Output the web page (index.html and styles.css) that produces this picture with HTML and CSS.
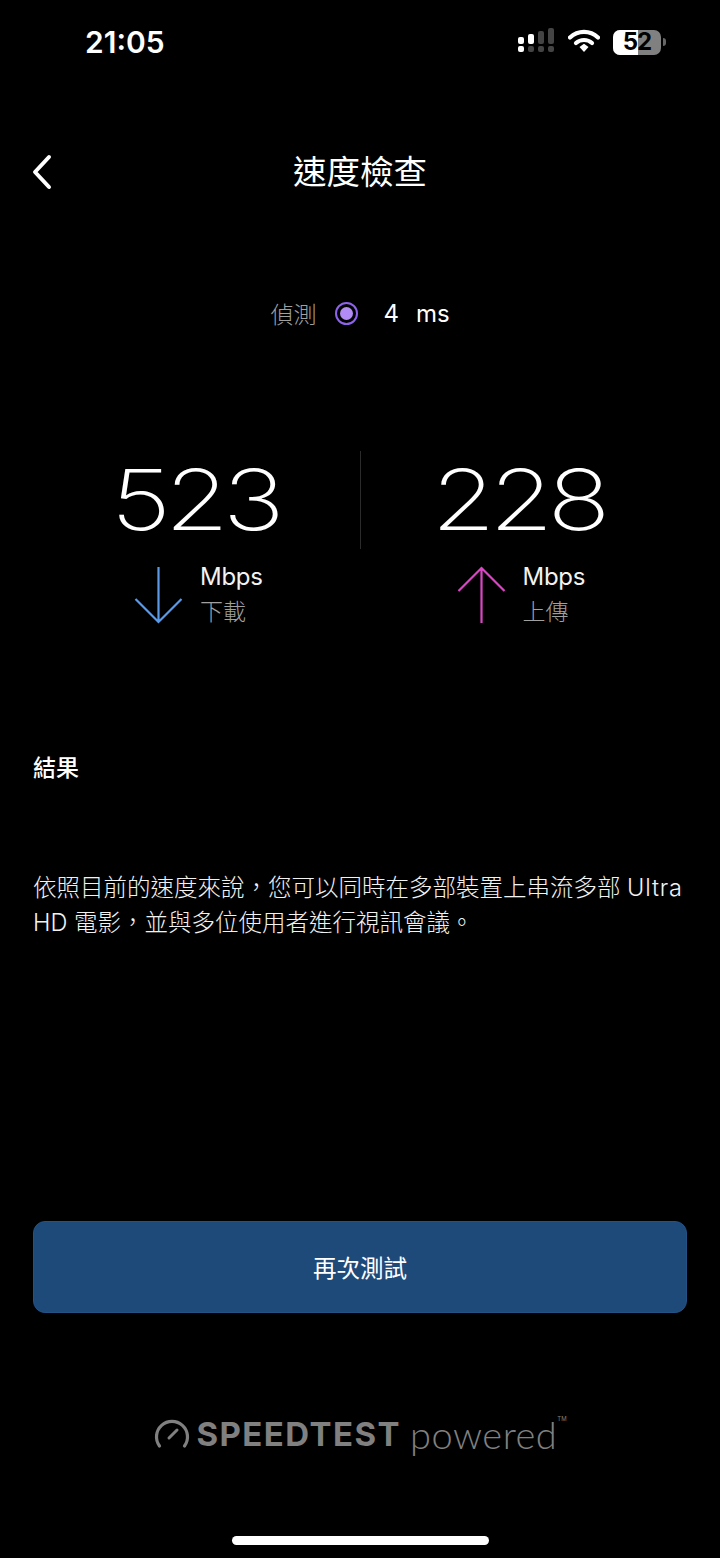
FILE: index.html
```html
<!DOCTYPE html>
<html lang="zh-Hant">
<head>
<meta charset="utf-8">
<title>速度檢查</title>
<link rel="stylesheet" href="styles.css">
</head>
<body>
<div class="page">
  <header class="status">
    <span class="clock">21:05</span>
    <div class="status-icons">
      <svg class="cell" width="38" height="26" viewBox="0 0 38 26">
        <g fill="#fff">
          <rect x="0" y="9" width="6" height="7" rx="2"/>
          <rect x="0" y="18" width="6" height="6" rx="2"/>
          <rect x="10" y="6" width="6" height="10" rx="2"/>
        </g>
        <g fill="#444">
          <rect x="10" y="18" width="6" height="6" rx="2"/>
          <rect x="20" y="3" width="6" height="13" rx="2"/>
          <rect x="20" y="18" width="6" height="6" rx="2"/>
          <rect x="30" y="0" width="6" height="16" rx="2"/>
          <rect x="30" y="18" width="6" height="6" rx="2"/>
        </g>
      </svg>
      <svg class="wifi" width="32" height="24" viewBox="0 0 32 24">
        <path d="M2 8.5C10 1 22 1 30 8.500" fill="none" stroke="#fff" stroke-width="4.200" stroke-linecap="round"/>
        <path d="M8 14C12.500 10 19.500 10 24 14" fill="none" stroke="#fff" stroke-width="4.200" stroke-linecap="round"/>
        <path d="M11.500 18L16 14.800L20.500 18L16 23Z" fill="#fff"/>
      </svg>
      <div class="battery">
        <div class="battery-body"><div class="battery-fill"></div><span class="battery-num">52</span></div>
        <div class="battery-cap"></div>
      </div>
    </div>
  </header>

  <nav class="nav">
    <svg class="back" width="20" height="36" viewBox="0 0 20 36">
      <path d="M17 3L3 18L17 33" fill="none" stroke="#fff" stroke-width="4" stroke-linecap="round" stroke-linejoin="round"/>
    </svg>
    <h1 class="title">速度檢查</h1>
  </nav>

  <div class="ping">
    <span class="ping-label">偵測</span>
    <span class="ping-dot"><span class="ping-core"></span></span>
    <span class="ping-value">4</span>
    <span class="ping-unit">ms</span>
  </div>

  <section class="speeds">
    <div class="speed speed-down">
      <div class="number">523</div>
      <div class="meta">
        <svg class="arrow" width="50" height="60" viewBox="0 0 50 60">
          <path d="M24.500 2V57M1.500 34L24.500 57L47.500 34" fill="none" stroke="#5b9ae6" stroke-width="2.200"/>
        </svg>
        <div class="labels"><span class="unit">Mbps</span><span class="kind">下載</span></div>
      </div>
    </div>
    <div class="divider"></div>
    <div class="speed speed-up">
      <div class="number">228</div>
      <div class="meta">
        <svg class="arrow" width="50" height="60" viewBox="0 0 50 60">
          <path d="M24.500 58V3M1.500 26L24.500 3L47.500 26" fill="none" stroke="#d948c4" stroke-width="2.200"/>
        </svg>
        <div class="labels"><span class="unit">Mbps</span><span class="kind">上傳</span></div>
      </div>
    </div>
  </section>

  <h2 class="result-title">結果</h2>
  <p class="result-text">依照目前的速度來說，您可以同時在多部裝置上串流多部 <span class="latin">Ultra</span> HD 電影，並與多位使用者進行視訊會議。</p>

  <button class="retest">再次測試</button>

  <footer class="brand">
    <svg class="gauge" width="36" height="30" viewBox="0 0 36 30">
      <path d="M5.500 27A15.500 15.500 0 1 1 30.500 27" fill="none" stroke="#808080" stroke-width="3.200" stroke-linecap="round"/>
      <path d="M15 19L23 11" fill="none" stroke="#808080" stroke-width="3" stroke-linecap="round"/>
    </svg>
    <span class="brand-name">SPEEDTEST</span>
    <span class="brand-powered">powered</span><span class="brand-tm">TM</span>
  </footer>

  <div class="home-bar"></div>
</div>
</body>
</html>
```
FILE: styles.css
```css
* { box-sizing: border-box; margin: 0; padding: 0; }
html, body { background: #000; }
body { font-family: Inter, "Noto Sans CJK TC", sans-serif; color: #fff; }
.page { width: 720px; height: 1558px; display: flex; flex-direction: column; overflow: hidden; }

.status { height: 86px; padding: 24px 54px 0 85px; display: flex; justify-content: space-between; align-items: flex-start; }
.clock { font-size: 30px; line-height: 36px; font-weight: 600; }
.status-icons { display: flex; align-items: center; gap: 11px; height: 36px; }
.cell { margin-top: -3px; }
.wifi { margin-top: -3px; margin-left: 1px; }
.battery { display: flex; align-items: center; gap: 2px; margin-left: 2px; }
.battery-body { position: relative; width: 48px; height: 25px; border-radius: 7px; background: #808080; display: flex; align-items: center; justify-content: center; }
.battery-fill { position: absolute; left: 0; top: 0; bottom: 0; width: 52%; background: #fff; border-radius: 7px 0 0 7px; }
.battery-num { position: relative; color: #000; font-size: 24px; line-height: 24px; font-weight: 700; letter-spacing: -1px; }
.battery-cap { width: 3px; height: 8px; border-radius: 0 3px 3px 0; background: #666; }

.nav { position: relative; height: 64px; margin-top: 54px; display: flex; align-items: center; justify-content: center; }
.back { position: absolute; left: 32px; top: 14px; }
.title { font-size: 33.500px; line-height: 44px; font-weight: 400; }

.ping { margin-top: 91px; height: 36px; display: flex; align-items: center; justify-content: center; }
.ping-label { font-size: 23px; color: #a0a0a0; font-weight: 300; }
.ping-dot { width: 23px; height: 23px; margin-left: 19px; border: 2px solid #8d63ea; border-radius: 50%; display: flex; align-items: center; justify-content: center; }
.ping-core { width: 13px; height: 13px; border-radius: 50%; background: #b18cf5; }
.ping-value { margin-left: 25px; font-size: 24px; }
.ping-unit { margin-left: 17px; font-size: 24px; }

.speeds { margin-top: 120px; height: 190px; display: grid; grid-template-columns: 1fr 1px 1fr; align-items: start; }
.speed { display: flex; flex-direction: column; align-items: center; }
.speed-down { padding-left: 29px; }
.speed-up { padding-right: 46px; }
.number { font-size: 84px; line-height: 100px; font-weight: 150; letter-spacing: -5px; margin-top: -1px; transform: scaleX(1.24); }
.divider { height: 98px; background: #2b2b2b; }
.meta { display: flex; gap: 16px; margin-top: 10px; align-self: flex-start; margin-left: 105px; }
.speed-up .meta { margin-left: 96px; }
.arrow { margin-top: 5px; }
.labels { display: flex; flex-direction: column; }
.unit { font-size: 24px; line-height: 34px; color: #f2f2f2; letter-spacing: -0.300px; }
.kind { font-size: 23px; line-height: 36px; color: #a0a0a0; font-weight: 300; }

.result-title { margin: 111px 33px 0; font-size: 23px; line-height: 32px; font-weight: 500; }
.result-text { margin: 86px 33px 0; font-size: 23.500px; line-height: 35px; color: #f2f2f2; font-weight: 300; }
.latin { letter-spacing: 0.800px; }

.retest { margin: 281px 33px 0; height: 92px; width: 654px; border: 1px solid #235285; border-radius: 12px; background: #1e4a7a; color: #fff; font: inherit; font-size: 23.500px; font-weight: 400; }

.brand { margin-top: 98px; padding-left: 1px; display: flex; align-items: center; justify-content: center; height: 46px; color: #808080; }
.gauge { margin-right: 6px; }
.brand-name { font-family: Inter, sans-serif; font-weight: 700; font-size: 33px; letter-spacing: 1.450px; }
.brand-powered { font-family: Lato, sans-serif; font-weight: 300; font-size: 38px; letter-spacing: 0.500px; margin-left: 9px; }
.brand-tm { font-size: 6px; align-self: flex-start; margin-top: 4px; }

.home-bar { margin: 79px auto 0; width: 257px; height: 9px; border-radius: 5px; background: #fff; }
```
